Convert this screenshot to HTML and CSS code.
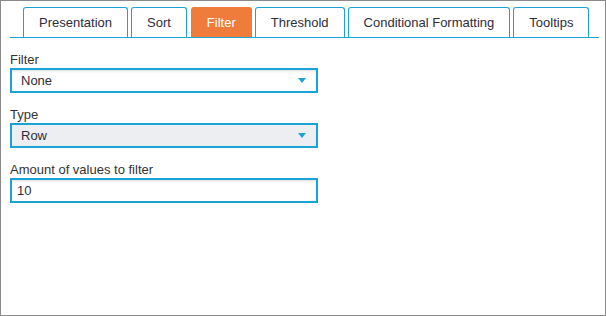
FILE: index.html
```html
<!DOCTYPE html>
<html lang="en">
<head>
  <meta charset="UTF-8" />
  <title>Filter</title>
  <link rel="stylesheet" href="styles.css">
</head>
<body>
  <div class="panel">
    <div class="tab-bar">
      <div class="tab">Presentation</div>
      <div class="tab">Sort</div>
      <div class="tab active">Filter</div>
      <div class="tab">Threshold</div>
      <div class="tab">Conditional Formatting</div>
      <div class="tab">Tooltips</div>
    </div>
    <div class="form">
      <div class="field">
        <label>Filter</label>
        <div class="select">
          <span>None</span>
          <span class="arrow"></span>
        </div>
      </div>
      <div class="field">
        <label>Type</label>
        <div class="select disabled">
          <span>Row</span>
          <span class="arrow"></span>
        </div>
      </div>
      <div class="field">
        <label>Amount of values to filter</label>
        <input type="text" value="10">
      </div>
    </div>
  </div>
</body>
</html>
```

FILE: styles.css
```css
* {
  box-sizing: border-box;
  font-family: 'Liberation Sans', Arial, sans-serif;
}
body {
  margin: 0;
  background: #fff;
  color: #2d2d3a;
}
.panel {
  width: 606px;
  height: 316px;
  border: 1px solid #8a8a8a;
  padding: 6px 6px 0 9px;
}
.tab-bar {
  display: flex;
  gap: 3px;
  padding-left: 13px;
  border-bottom: 1px solid #1ba3d6;
}
.tab {
  height: 30px;
  line-height: 29px;
  padding: 0 15px;
  font-size: 13px;
  color: #2d2d3a;
  border: 1px solid #1ba3d6;
  border-bottom: none;
  border-radius: 3px 3px 0 0;
  background: #fff;
}
.tab.active {
  margin-left: 1px;
  background: #ef7c3a;
  border-color: #ef7c3a;
  color: #fff;
}
.form {
  padding-top: 14px;
  width: 308px;
}
.field {
  margin-bottom: 14px;
}
.field label {
  display: block;
  font-size: 13px;
  line-height: 15px;
  margin-bottom: 1px;
  color: #333;
}
.select,
.field input {
  display: flex;
  align-items: center;
  justify-content: space-between;
  width: 100%;
  height: 25px;
  padding: 0 10px 0 9px;
  border: 2px solid #1ba3d6;
  background: #fff;
  font-size: 13px;
  color: #2d2d3a;
  box-shadow: inset 0 3px 3px -2px rgba(0, 0, 0, 0.15);
}
.select.disabled {
  background: #eceef1;
  box-shadow: none;
}
.field input {
  outline: none;
  margin: 0;
  padding-left: 5px;
}
.arrow {
  width: 0;
  height: 0;
  border-left: 4px solid transparent;
  border-right: 4px solid transparent;
  border-top: 5px solid #1ba3d6;
}
```
